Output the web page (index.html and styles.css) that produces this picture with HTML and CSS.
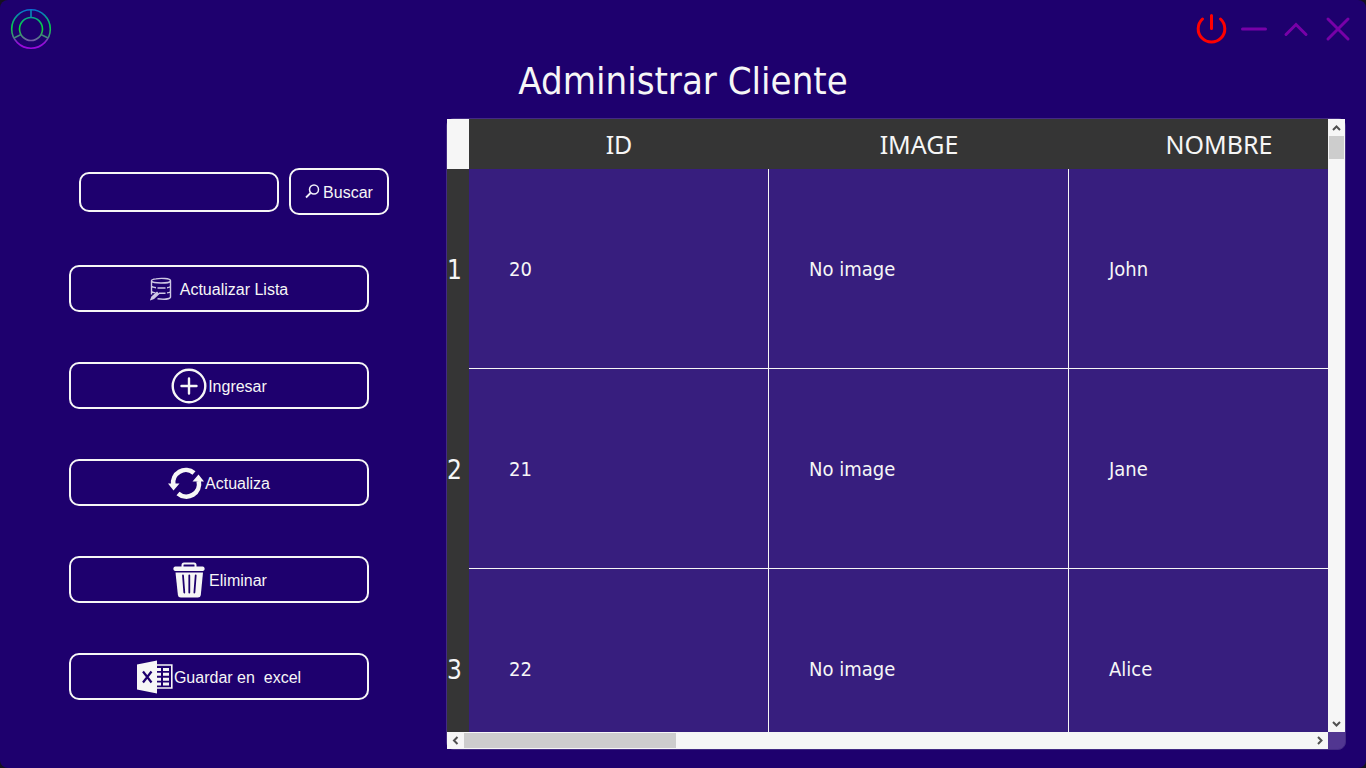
FILE: index.html
```html
<!DOCTYPE html>
<html lang="es">
<head>
<meta charset="utf-8">
<title>Administrar Cliente</title>
<link rel="stylesheet" href="styles.css">
</head>
<body>
<div class="window">
  <header class="titlebar">
    <svg class="logo" viewBox="0 0 42 42" fill="none" stroke-width="1.6" aria-hidden="true">
      <defs>
        <linearGradient id="ring" x1="0" y1="0" x2="0" y2="1">
          <stop offset="0" stop-color="#0a6fd0"/><stop offset=".45" stop-color="#06d048"/><stop offset=".68" stop-color="#3f8f78"/><stop offset=".85" stop-color="#9410d8"/><stop offset="1" stop-color="#9a08dc"/>
        </linearGradient>
        <linearGradient id="core" x1="0" y1="0" x2="0" y2="1">
          <stop offset="0" stop-color="#08a888"/><stop offset=".5" stop-color="#04e02c"/><stop offset="1" stop-color="#7558a8"/>
        </linearGradient>
      </defs>
      <circle cx="21" cy="21" r="19.3" stroke="url(#ring)"/>
      <circle cx="21" cy="21" r="11.5" stroke="url(#core)"/>
      <path d="M21 2v7.500" stroke="#0888b8"/>
      <path d="M11 26.500l-7 3.500M31 26.500l7 3.500" stroke="#428878"/>
    </svg>
    <div class="controls">
      <button class="control power" type="button" aria-label="Apagar"><svg viewBox="0 0 32 32"><path d="M6.500 6a13.300 13.300 0 1 0 18 0M15.500 2.500v13"/></svg></button>
      <button class="control" type="button" aria-label="Minimizar"><svg viewBox="0 0 32 32"><path d="M4.500 16h23"/></svg></button>
      <button class="control" type="button" aria-label="Restaurar"><svg viewBox="0 0 32 32"><path d="M6 21.500L16 11.500l10 10"/></svg></button>
      <button class="control" type="button" aria-label="Cerrar"><svg viewBox="0 0 32 32"><path d="M6 6l20 20M26 6l-20 20"/></svg></button>
    </div>
  </header>
  <h1 class="title">Administrar Cliente</h1>
  <main class="content">
    <section class="actions">
      <form class="search">
        <input class="field" type="text" aria-label="Buscar cliente">
        <button class="btn btn-search" type="button">
          <svg class="icon-find" viewBox="0 0 16 16" fill="none" stroke="#f0f0fa" stroke-width="1.500"><circle cx="9" cy="5.500" r="4.500"/><path d="M5.500 9L1 13.500" stroke-width="1.800"/></svg>
          <span>Buscar</span>
        </button>
      </form>
      <button class="btn btn-wide" type="button">
        <svg class="icon icon-list" viewBox="0 0 22 24" fill="none" stroke="#cfc8e4" stroke-width="1.400"><path d="M6 1.900C10 .9 20.500 1.200 20.500 3.600S16 6 11 6 1.500 5.500 1.500 3.700C1.500 2.900 3 2.200 6 1.900zM1.500 3.700v13.800M20.500 3.600v17M1.500 9.300c1 .9 2.500 1.300 4.500 1.500M7.500 11h8M17 10.700c2-.2 3-.7 3.500-1.300M1.500 14.500c1 .9 2 1.200 4 1.400M9 16.200h6.500M17 15.900c2-.2 3-.7 3.500-1.300M7.500 21.800c6 .8 12 .2 13-1.500"/><path d="M1 22.500l1-2.500 5-4.500 1.500 1.500-4.800 4.500z" fill="#cfc8e4"/></svg>
        <span class="spaced">Actualizar Lista</span>
      </button>
      <button class="btn btn-wide" type="button">
        <svg class="icon" viewBox="0 0 36 36" fill="none" stroke="#f6f6f6" stroke-width="2.400"><circle cx="18" cy="18" r="16.300"/><path d="M18 10.500v15M10.500 18h15" stroke-linecap="round"/></svg>
        <span>Ingresar</span>
      </button>
      <button class="btn btn-wide" type="button">
        <svg class="icon" viewBox="0 0 36 36"><path fill="none" stroke="#f6f6f6" stroke-width="4.600" d="M5.300 20A12.700 12.700 0 0 1 26 8M30.700 16A12.700 12.700 0 0 1 10 28.500"/><path fill="#f6f6f6" d="M0 18.500h11.500L5.500 25.500zM24.500 16.500h11.500L30.500 9.500z"/></svg>
        <span>Actualiza</span>
      </button>
      <button class="btn btn-wide" type="button">
        <svg class="icon" viewBox="0 0 36 36"><path fill="none" stroke="#f6f6f6" stroke-width="2" d="M11.500 5V3Q11.500 1.500 13 1.500h10Q24.500 1.500 24.500 3V5"/><rect x="2.500" y="4.500" width="31" height="4.500" rx="1.800" fill="#f6f6f6"/><path fill="#f6f6f6" d="M4.500 10.500h27.500L29.800 33q-.3 2.500-3 2.500h-17Q7.200 35.500 6.900 33z"/><path fill="none" stroke="#1e006e" stroke-width="1.800" stroke-linecap="round" d="M12 13.500l1.300 17M18.300 13.500v17M24.700 13.500l-1.300 17"/></svg>
        <span class="near">Eliminar</span>
      </button>
      <button class="btn btn-wide" type="button">
        <svg class="icon" viewBox="0 0 36 36"><path fill="#f6f6f6" d="M0 5.500L20 1.500v33L0 30.500z"/><path fill="none" stroke="#f6f6f6" stroke-width="1.600" d="M20 6h14.800v23H20"/><path fill="none" stroke="#f6f6f6" stroke-width="3" d="M20 10.500h4M26 10.500h6M20 15.300h4M26 15.300h6M20 20.200h4M26 20.200h6M20 25h4M26 25h6"/><path fill="none" stroke="#1e006e" stroke-width="2.200" d="M6 12.500l8.500 11M14.500 12.500l-8.500 11"/></svg>
        <span class="pre">Guardar en  excel</span>
      </button>
    </section>
    <section class="grid">
      <div class="viewport">
        <table class="table">
          <colgroup><col class="col-index"><col><col><col></colgroup>
          <thead><tr><td class="corner"></td><th scope="col">ID</th><th scope="col">IMAGE</th><th scope="col">NOMBRE</th></tr></thead>
          <tbody>
            <tr><th scope="row">1</th><td>20</td><td>No image</td><td>John</td></tr>
            <tr><th scope="row">2</th><td>21</td><td>No image</td><td>Jane</td></tr>
            <tr><th scope="row">3</th><td>22</td><td>No image</td><td>Alice</td></tr>
          </tbody>
        </table>
      </div>
      <div class="scroll scroll-y">
        <button class="arrow" type="button" aria-label="Arriba"><svg viewBox="0 0 17 17"><path d="M5 11l3.500-3.500L12 11"/></svg></button>
        <div class="track"><div class="thumb"></div></div>
        <button class="arrow" type="button" aria-label="Abajo"><svg viewBox="0 0 17 17"><path d="M5 7l3.500 3.500L12 7"/></svg></button>
      </div>
      <div class="scroll scroll-x">
        <button class="arrow" type="button" aria-label="Izquierda"><svg viewBox="0 0 17 17"><path d="M10.500 5L7 8.500l3.500 3.500"/></svg></button>
        <div class="track"><div class="thumb"></div></div>
        <button class="arrow" type="button" aria-label="Derecha"><svg viewBox="0 0 17 17"><path d="M7 5l3.500 3.500L7 12"/></svg></button>
      </div>
    </section>
  </main>
</div>
</body>
</html>
```

FILE: styles.css
```css
* { box-sizing: border-box; }
body { margin: 0; background: #151020; color: #f6f6f6; font-family: "DejaVu Sans Condensed", "Noto Sans", sans-serif; }
button { font: inherit; color: inherit; padding: 0; border: 0; background: none; }
svg { display: block; flex: none; }

.window { height: 100vh; display: flex; flex-direction: column; padding-bottom: 18px; background: #1e006e; border-radius: 8px; overflow: hidden; }
.titlebar { display: flex; justify-content: space-between; align-items: center; height: 58px; padding: 0 12px 0 10px; }
.logo { width: 42px; height: 42px; }
.controls { display: flex; gap: 10px; }
.control { width: 32px; height: 32px; }
.control svg { width: 32px; height: 32px; fill: none; stroke: #7800a8; stroke-width: 3; stroke-linecap: round; }
.control.power svg { stroke: #ff0000; }
.title { margin: 0; height: 60px; line-height: 46px; font-size: 38px; font-weight: 400; text-align: center; }

.content { flex: 1; min-height: 0; display: grid; grid-template: minmax(0, 1fr) / 426px minmax(0, 1fr); padding: 0 20px; }
.actions { display: flex; flex-direction: column; justify-content: space-evenly; padding: 0 36px 0 49px; font-family: "Liberation Sans", sans-serif; font-size: 16px; }
.search { display: flex; align-items: center; gap: 10px; margin: 0; padding-left: 10px; }
.field { width: 200px; height: 40px; padding: 0 8px; font: inherit; color: inherit; background: transparent; border: 2px solid #f6f6f6; border-radius: 10px; }
.btn { display: flex; align-items: center; justify-content: center; height: 47px; border: 2px solid #f6f6f6; border-radius: 10px; }
.btn span { padding-top: 2px; }
.btn-search { width: 100px; gap: 2px; }
.btn-wide { width: 300px; gap: 1px; }
.icon-find { width: 16px; height: 16px; }
.icon { width: 36px; height: 36px; }
.icon-list { width: 22px; height: 24px; }
.btn .spaced { padding-left: 7px; }
.btn .near { padding-left: 1px; }
.pre { white-space: pre; }

.grid { display: grid; grid-template: minmax(0, 1fr) 17px / minmax(0, 1fr) 17px; background: #513691; border: 1px solid #432a84; border-radius: 8px; }
.viewport { overflow: hidden; background: #371e7e; }
.table { width: 922px; table-layout: fixed; border-collapse: separate; border-spacing: 0; font-size: 20px; }
.table col { width: 300px; }
.table .col-index { width: 22px; }
.table th { padding: 0; font-weight: 400; background: #353535; }
.table thead th { height: 50px; font-family: "Noto Sans", sans-serif; font-size: 25px; line-height: 50px; }
.table .corner { height: 50px; padding: 0; border: 0; background: #f6f6f6; }
.table td { height: 200px; padding: 0 0 0 40px; border-right: 1px solid #f6f6f6; border-bottom: 1px solid #f6f6f6; }
.table tbody th { padding-top: 2px; text-align: left; font-size: 26px; }

.scroll { display: flex; background: #f6f6f6; }
.scroll-y { flex-direction: column; }
.arrow, .arrow svg { width: 17px; height: 17px; }
.arrow svg { fill: none; stroke: #505050; stroke-width: 2; }
.track { flex: 1; }
.thumb { background: #cdcdcd; }
.scroll-y .thumb { height: 4%; margin: 0 1px; }
.scroll-x .thumb { width: 25%; height: 15px; margin: 1px 0; }
```
